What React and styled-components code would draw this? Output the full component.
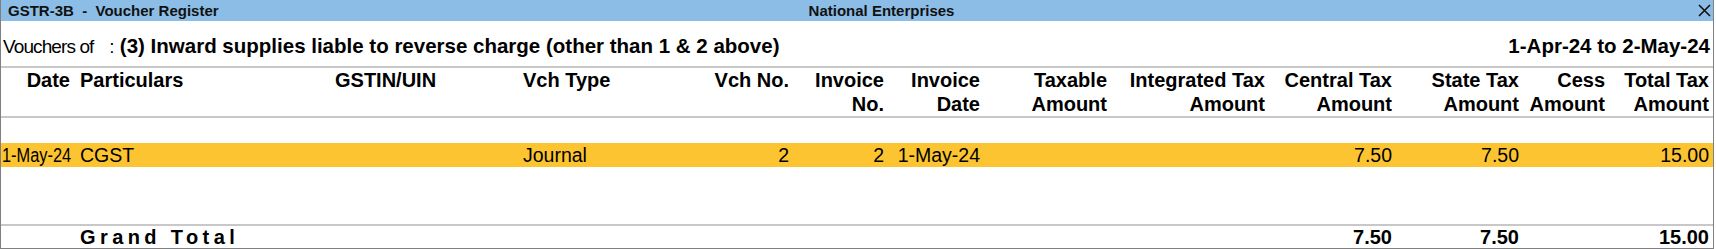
import styled, { createGlobalStyle } from 'styled-components';

const Global = createGlobalStyle`
    body {
        margin: 0;
        background: #fff;
        font-family: "Liberation Sans", Arial, sans-serif;
        color: #000;
    }
`;

const cols = '73px 257px 188px 181px 93px 95px 96px 127px 158px 127px 127px 86px 104px';

const Frame = styled.div`
    width: 1714px;
    height: 249px;
    box-sizing: border-box;
    border: 1px solid #808080;
    border-top: none;
    display: flex;
    flex-direction: column;
    overflow: hidden;
`;

const TitleBar = styled.div`
    height: 21px;
    flex: none;
    background: #8bbde6;
    display: grid;
    grid-template-columns: 1fr auto 1fr;
    align-items: center;
    padding: 0 2px 0 7px;
    font-size: 15px;
    font-weight: bold;
    color: #111;
    white-space: pre;
`;

const Company = styled.span`
    margin-left: 44px;
`;

const Close = styled.div`
    justify-self: end;
    display: flex;
    align-items: center;
`;

const SubRow = styled.div`
    height: 47px;
    flex: none;
    box-sizing: border-box;
    padding: 13px 3px 0 2px;
    display: flex;
    justify-content: space-between;
    align-items: baseline;
    font-size: 19px;
    line-height: 24px;
    white-space: pre;
    border-bottom: 2px solid #c8c8c8;
`;

const Label = styled.span`
    letter-spacing: -0.9px;
`;

const Bold = styled.span`
    font-weight: bold;
    font-size: 20.5px;
`;

const Grid = styled.div`
    display: grid;
    flex: none;
    grid-template-columns: ${cols};
    font-size: ${p => (p.$bold ? '20px' : '19.5px')};
    font-weight: ${p => (p.$bold ? 'bold' : 'normal')};
    background: ${p => p.$bg || 'transparent'};
`;

const Header = styled(Grid)`
    height: 50px;
    line-height: 24px;
    box-sizing: border-box;
    border-bottom: 2px solid #c8c8c8;
`;

const Body = styled.div`
    height: 108px;
    flex: none;
    padding-top: 25px;
    box-sizing: border-box;
    border-bottom: 2px solid #c8c8c8;
`;

const Row = styled(Grid)`
    height: 24px;
    line-height: 24px;
`;

const Cell = styled.div`
    text-align: ${p => p.$align || 'right'};
    padding: ${p => (p.$align === 'left' ? `0 0 0 ${p.$pad ?? 4}px` : '0 4px 0 0')};
    white-space: pre;
`;

const Squeezed = styled.span`
    display: inline-block;
    transform: scaleX(0.84);
    transform-origin: left center;
`;

const Spaced = styled.span`
    letter-spacing: 4.4px;
`;

const Total = styled(Grid)`
    height: 22px;
    line-height: 22px;
`;

const headers = [
    ['Date', 'right'],
    ['Particulars', 'left', 6],
    ['GSTIN/UIN', 'left'],
    ['Vch Type', 'left'],
    ['Vch No.'],
    ['Invoice\nNo.'],
    ['Invoice\nDate'],
    ['Taxable\nAmount'],
    ['Integrated Tax\nAmount'],
    ['Central Tax\nAmount'],
    ['State Tax\nAmount'],
    ['Cess\nAmount'],
    ['Total Tax\nAmount'],
];

const row = ['', 'CGST', '', 'Journal', '2', '2', '1-May-24', '', '', '7.50', '7.50', '', '15.00'];

const App = () => {
    return (
        <>
            <Global />
            <Frame>
                <TitleBar>
                    <span>GSTR-3B  -  Voucher Register</span>
                    <Company>National Enterprises</Company>
                    <Close>
                        <svg width="13" height="13" viewBox="0 0 13 13">
                            <path d="M1 1 L12 12 M12 1 L1 12" stroke="#111" strokeWidth="1.6" />
                        </svg>
                    </Close>
                </TitleBar>
                <SubRow>
                    <span>
                        <Label>Vouchers of</Label>   : <Bold>(3) Inward supplies liable to reverse charge (other than 1 &amp; 2 above)</Bold>
                    </span>
                    <Bold>1-Apr-24 to 2-May-24</Bold>
                </SubRow>
                <Header $bold>
                    {headers.map(([t, a, pad], i) => (
                        <Cell key={i} $align={a} $pad={pad}>
                            {t}
                        </Cell>
                    ))}
                </Header>
                <Body>
                    <Row $bg="#fdc431">
                        <Cell $align="left" $pad={1}>
                            <Squeezed>1-May-24</Squeezed>
                        </Cell>
                        {row.slice(1).map((t, i) => (
                            <Cell key={i} $align={i === 0 || i === 2 ? 'left' : undefined} $pad={i === 0 ? 6 : 4}>
                                {t}
                            </Cell>
                        ))}
                    </Row>
                </Body>
                <Total $bold>
                    <Cell />
                    <Cell $align="left" $pad={6}>
                        <Spaced>Grand Total</Spaced>
                    </Cell>
                    <Cell />
                    <Cell />
                    <Cell />
                    <Cell />
                    <Cell />
                    <Cell />
                    <Cell />
                    <Cell>7.50</Cell>
                    <Cell>7.50</Cell>
                    <Cell />
                    <Cell>15.00</Cell>
                </Total>
            </Frame>
        </>
    );
};

export default App;
